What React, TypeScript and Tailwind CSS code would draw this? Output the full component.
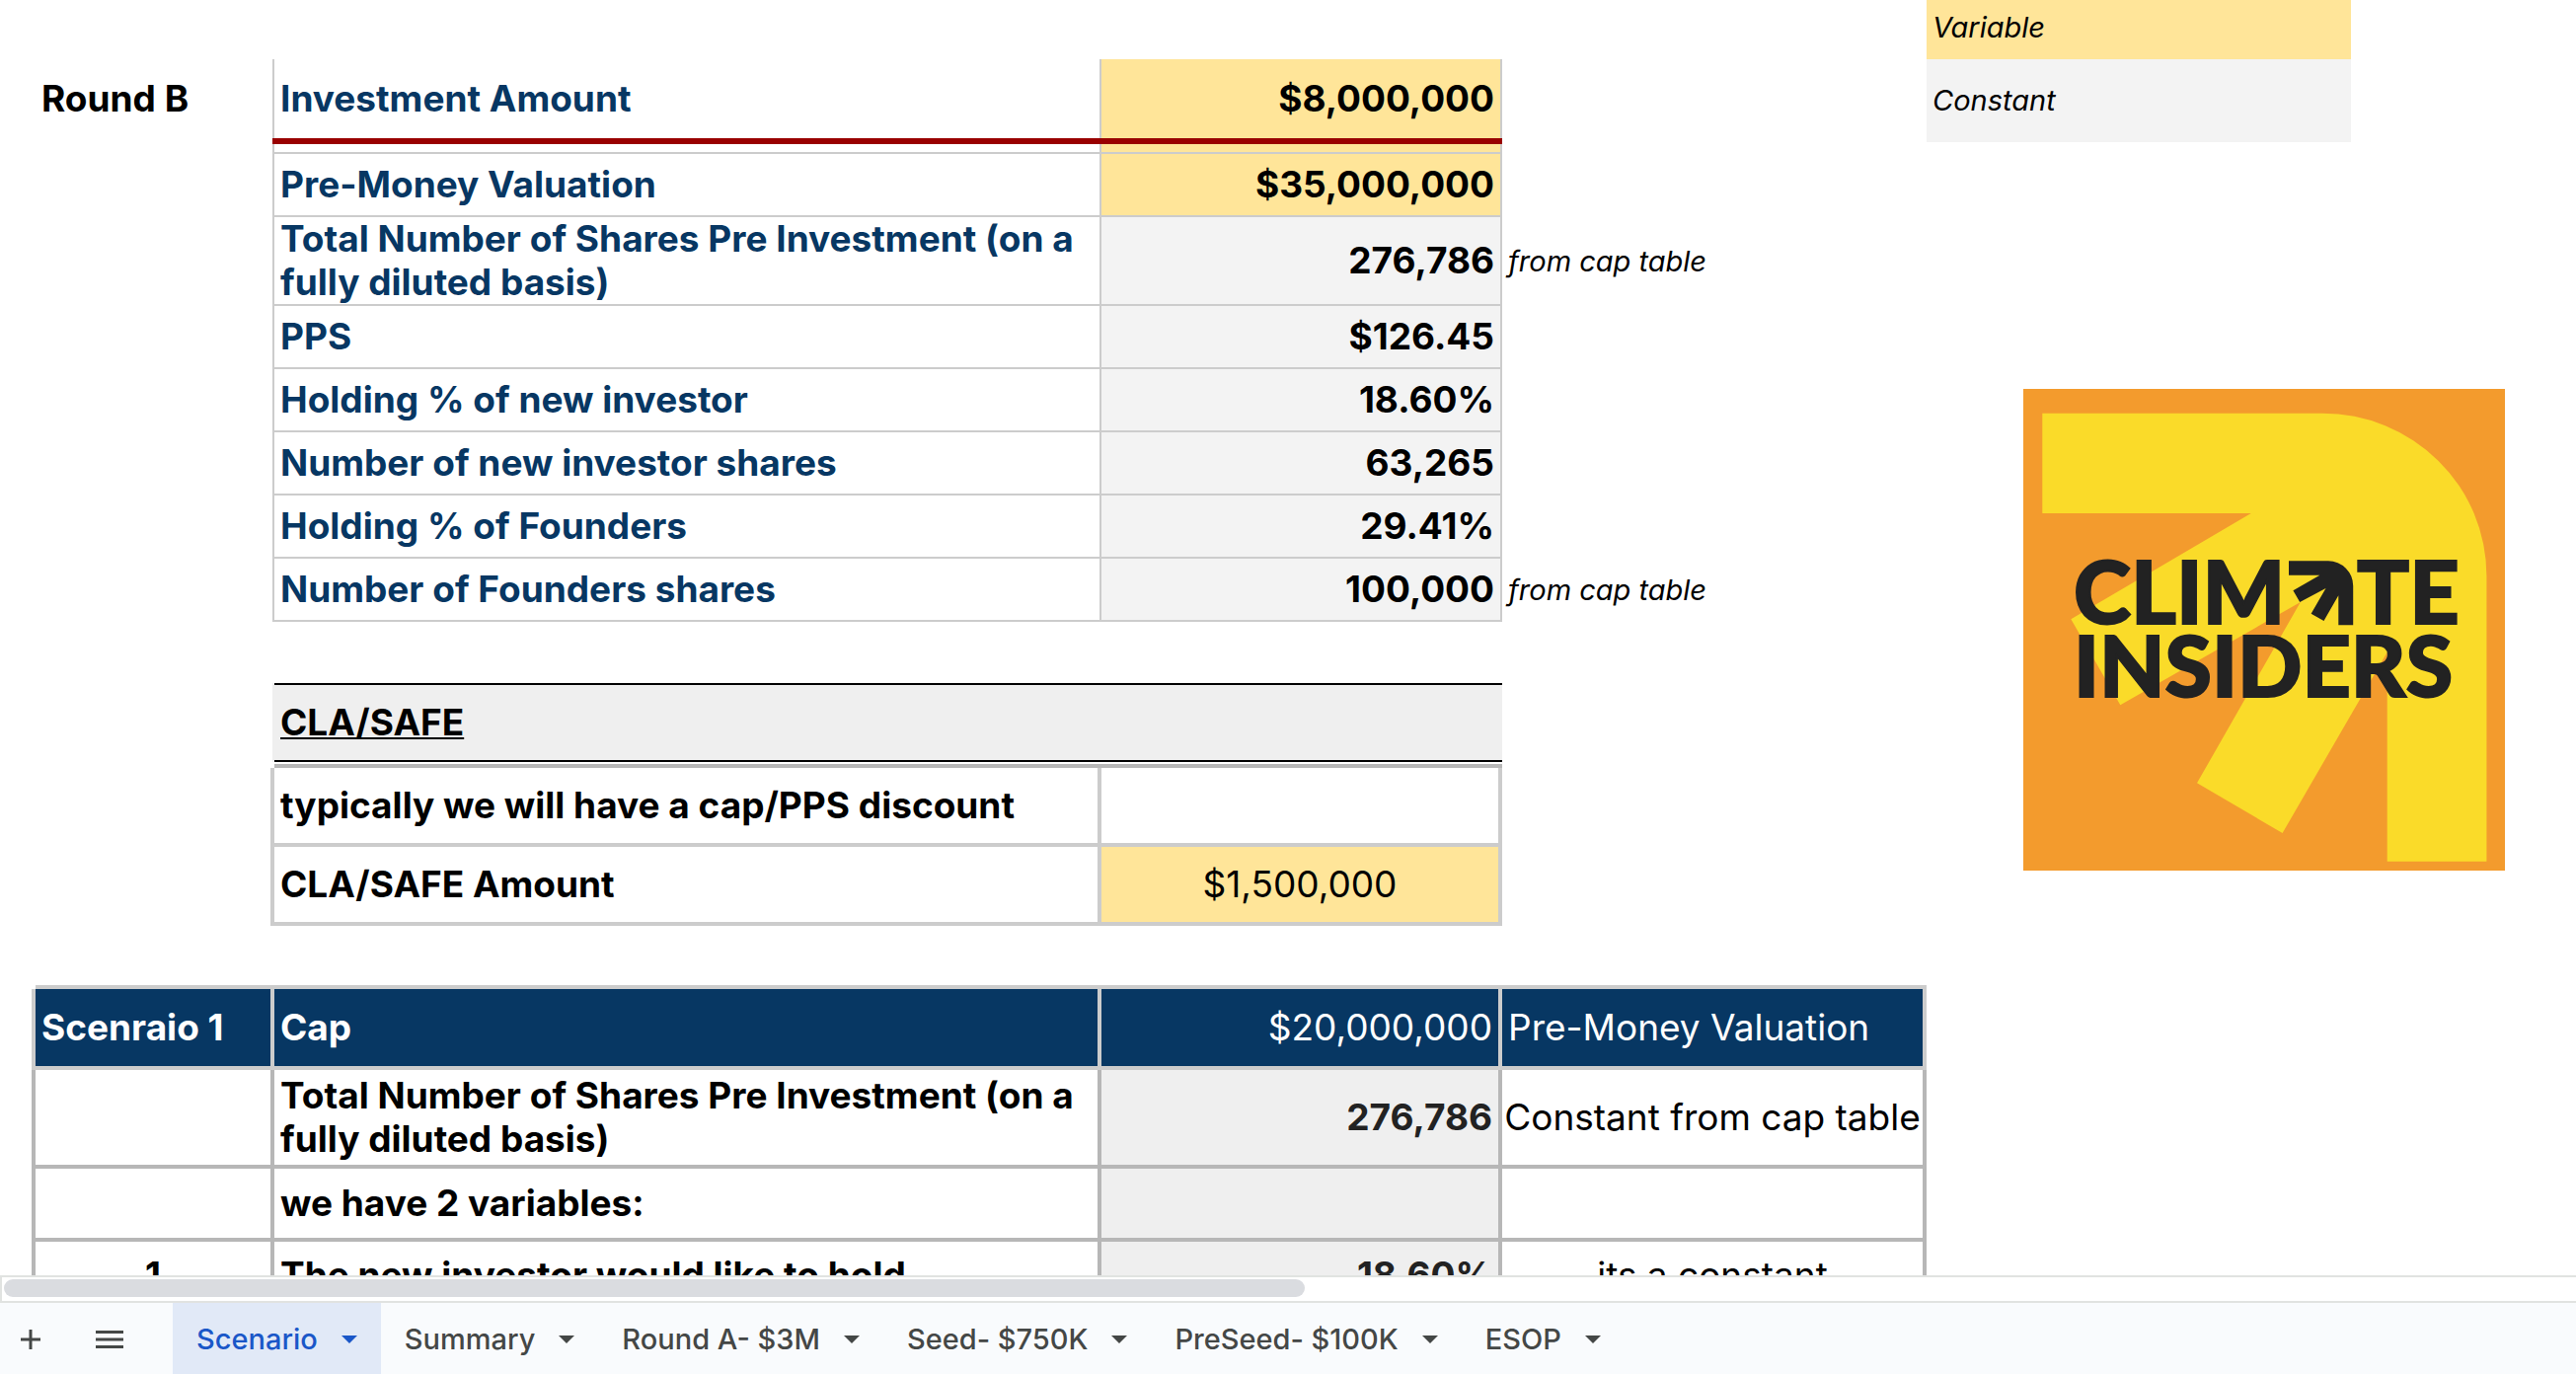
const roundRows = [
  { label: 'Pre-Money Valuation', value: '$35,000,000', variable: true, note: '' },
  { label: 'Total Number of Shares Pre Investment (on a fully diluted basis)', value: '276,786', variable: false, note: 'from cap table' },
  { label: 'PPS', value: '$126.45', variable: false, note: '' },
  { label: 'Holding % of new investor', value: '18.60%', variable: false, note: '' },
  { label: 'Number of new investor shares', value: '63,265', variable: false, note: '' },
  { label: 'Holding % of Founders', value: '29.41%', variable: false, note: '' },
  { label: 'Number of Founders shares', value: '100,000', variable: false, note: 'from cap table' },
]

const scenarioRows = [
  {
    index: '',
    label: 'Total Number of Shares Pre Investment (on a fully diluted basis)',
    value: '276,786',
    note: 'Constant from cap table',
    height: 'h-[100px]',
  },
  { index: '', label: 'we have 2 variables:', value: '', note: '', height: 'h-[74px]' },
  { index: '1', label: 'The new investor would like to hold', value: '18.60%', note: 'its a constant', height: 'h-[72px]' },
]

const tabs = ['Scenario', 'Summary', 'Round A- $3M', 'Seed- $750K', 'PreSeed- $100K', 'ESOP']

function RoundTable() {
  return (
    <tbody>
      <tr className="h-[60px]">
        <td colSpan={5} />
      </tr>
      <tr className="h-20">
        <td />
        <th scope="row" className="border-r-2 border-[#cccccc] pl-1.5 text-left">
          Round B
        </th>
        <td className="border-r-2 border-[#cccccc] px-1.5 text-[#073763]">Investment Amount</td>
        <td className="border-r-2 border-[#cccccc] bg-[#ffe599] px-1.5 text-right">$8,000,000</td>
        <td />
      </tr>
      {/* frozen row divider */}
      <tr className="h-1.5">
        <td />
        <td className="border-r-2 border-[#990000]" />
        <td colSpan={2} className="bg-[#990000]" />
        <td />
      </tr>
      <tr className="h-[10px]">
        <td />
        <td className="border-r-2 border-[#cccccc]" />
        <td className="border-r-2 border-b-2 border-[#cccccc]" />
        <td className="border-r-2 border-b-2 border-[#cccccc] bg-[#ffe599]" />
        <td />
      </tr>
      {roundRows.map((row) => (
        <tr key={row.label} className="h-16">
          <td />
          <td className="border-r-2 border-[#cccccc]" />
          <td className="border-r-2 border-b-2 border-[#cccccc] px-1.5 text-[#073763]">{row.label}</td>
          <td
            className={`border-r-2 border-b-2 border-[#cccccc] px-1.5 text-right ${
              row.variable ? 'bg-[#ffe599]' : 'bg-[#f3f3f3]'
            }`}
          >
            {row.value}
          </td>
          <td className="pl-1.5 text-[29px] font-normal italic">{row.note}</td>
        </tr>
      ))}
    </tbody>
  )
}

function SafeTable() {
  return (
    <tbody>
      <tr className="h-[62px]">
        <td colSpan={5} />
      </tr>
      <tr className="h-20">
        <td />
        <td className="border-r-2 border-[#efefef]" />
        <th
          scope="rowgroup"
          colSpan={2}
          className="border-y-2 border-black bg-[#efefef] px-1.5 text-left underline decoration-2 underline-offset-2"
        >
          CLA/SAFE
        </th>
        <td />
      </tr>
      <tr className="h-1.5">
        <td />
        <td />
        <td colSpan={2} className="border-b-4 border-[#b7b7b7]" />
        <td />
      </tr>
      <tr className="h-20">
        <td />
        <td className="border-r-4 border-[#cccccc]" />
        <td className="border-r-4 border-b-4 border-[#cccccc] px-1.5">typically we will have a cap/PPS discount</td>
        <td className="border-r-4 border-b-4 border-[#cccccc]" />
        <td />
      </tr>
      <tr className="h-20">
        <td />
        <td className="border-r-4 border-[#cccccc]" />
        <td className="border-r-4 border-b-4 border-[#cccccc] px-1.5">CLA/SAFE Amount</td>
        <td className="border-r-4 border-b-4 border-[#cccccc] bg-[#ffe599] text-center font-normal">$1,500,000</td>
        <td />
      </tr>
    </tbody>
  )
}

function ScenarioTable() {
  return (
    <tbody>
      <tr className="h-16">
        <td />
        <td colSpan={4} className="border-b-4 border-[#cccccc]" />
      </tr>
      <tr className="h-[82px] text-white">
        <td className="border-r-4 border-[#cccccc]" />
        <th scope="row" className="border-r-4 border-b-4 border-[#cccccc] bg-[#073763] pl-1.5 text-left">
          Scenraio 1
        </th>
        <td className="border-r-4 border-b-4 border-[#cccccc] bg-[#073763] px-1.5">Cap</td>
        <td className="border-r-4 border-b-4 border-[#cccccc] bg-[#073763] px-1.5 text-right font-normal">
          $20,000,000
        </td>
        <td className="border-r-4 border-b-4 border-[#cccccc] bg-[#073763] px-1.5 font-normal">Pre-Money Valuation</td>
      </tr>
      {scenarioRows.map((row) => (
        <tr key={row.label} className={row.height}>
          <td className="border-r-4 border-[#b7b7b7]" />
          <td className="border-r-4 border-b-4 border-[#b7b7b7] text-center">{row.index}</td>
          <td className="border-r-4 border-b-4 border-[#b7b7b7] px-1.5">{row.label}</td>
          <td className="border-r-4 border-b-4 border-[#b7b7b7] bg-[#efefef] px-1.5 text-right text-[#222222]">
            {row.value}
          </td>
          <td className="border-r-4 border-b-4 border-[#b7b7b7] text-center font-normal whitespace-nowrap">
            {row.note}
          </td>
        </tr>
      ))}
    </tbody>
  )
}

function Logo() {
  return (
    <svg viewBox="0 0 488 488" className="w-[488px] max-w-full" role="img" aria-label="Climate Insiders">
      <rect width="488" height="488" fill="#f39b2d" />
      <path
        d="M19.3 24.7H303A166.4 164.6 0 0 1 469.4 189.3V478.7H368.7V266.8L262.6 450L176 399.3L280.8 216L98.3 320.3L48.3 233.3L230.8 126H19.3Z"
        fill="#fadb29"
      />
      {/* arrow standing in for the A */}
      <path
        d="M269 174.3H309A25.2 25.2 0 0 1 334.2 199.5V239.3H319.3V209.3L304.5 235L291.6 227.7L306.5 202L280.2 216L273.4 204.3L300.4 188.7H269Z"
        fill="#222222"
      />
      <g fill="#222222" stroke="#222222" strokeWidth="2" fontFamily="Lato, sans-serif" fontWeight="900">
        <text x="51" y="238" fontSize="88">CLIM</text>
        <text x="338" y="238" fontSize="88">TE</text>
        <text x="51" y="312" fontSize="86">INSIDERS</text>
      </g>
    </svg>
  )
}

function SheetTabs() {
  return (
    <nav
      aria-label="Sheets"
      className="flex h-[74px] shrink-0 items-stretch border-t-2 border-[#e1e3e1] bg-[#f9fbfd] text-[29px] font-medium text-[#444746]"
    >
      <button type="button" aria-label="Add sheet" className="px-[21px] pt-0.5">
        <svg viewBox="0 0 20 20" className="size-5" fill="currentColor" aria-hidden="true">
          <path d="M8.5 0H11.5V8.5H20V11.5H11.5V20H8.5V11.5H0V8.5H8.5Z" />
        </svg>
      </button>
      <button type="button" aria-label="All sheets" className="mr-[15px] px-[35px] pt-0.5">
        <svg viewBox="0 0 28 18" className="h-[18px] w-7" fill="currentColor" aria-hidden="true">
          <path d="M0 0H28V3H0ZM0 7.5H28V10.5H0ZM0 15H28V18H0Z" />
        </svg>
      </button>
      {tabs.map((tab, i) => (
        <button
          key={tab}
          type="button"
          className={`flex items-center gap-6 px-6 pt-0.5 ${i === 0 ? 'bg-[#e1e9f7] text-[#1a57c8]' : ''}`}
        >
          {tab}
          <svg viewBox="0 0 16 8" className="h-2 w-4" fill="currentColor" aria-hidden="true">
            <path d="M0 0H16L8 8Z" />
          </svg>
        </button>
      ))}
    </nav>
  )
}

export default function App() {
  return (
    <div className="flex h-screen flex-col bg-white font-[Inter,sans-serif] text-black">
      <main className="flex min-h-0 flex-1 items-start overflow-hidden">
        <table className="min-w-0 flex-1 table-fixed border-separate border-spacing-0 text-[37px] leading-[44px] font-bold">
          <colgroup>
            <col className="w-9" />
            <col className="w-[242px]" />
            <col />
            <col className="w-[406px]" />
            <col className="w-[430px]" />
          </colgroup>
          <RoundTable />
          <SafeTable />
          <ScenarioTable />
        </table>
        <aside className="w-[658px] shrink-0">
          <ul className="w-[430px] text-[29px] leading-9 italic">
            <li className="flex h-[60px] items-center bg-[#ffe599] pb-1 pl-1.5">Variable</li>
            <li className="flex h-[84px] items-center bg-[#f3f3f3] pl-1.5">Constant</li>
          </ul>
          <div className="mt-[250px] ml-[98px]">
            <Logo />
          </div>
        </aside>
      </main>
      <div className="h-[26px] shrink-0 border-t-2 border-l-2 border-[#e1e3e1] px-0.5 py-0.5">
        <div className="h-[18px] w-[1318px] max-w-full rounded-full bg-[#dadce0]" />
      </div>
      <SheetTabs />
    </div>
  )
}
